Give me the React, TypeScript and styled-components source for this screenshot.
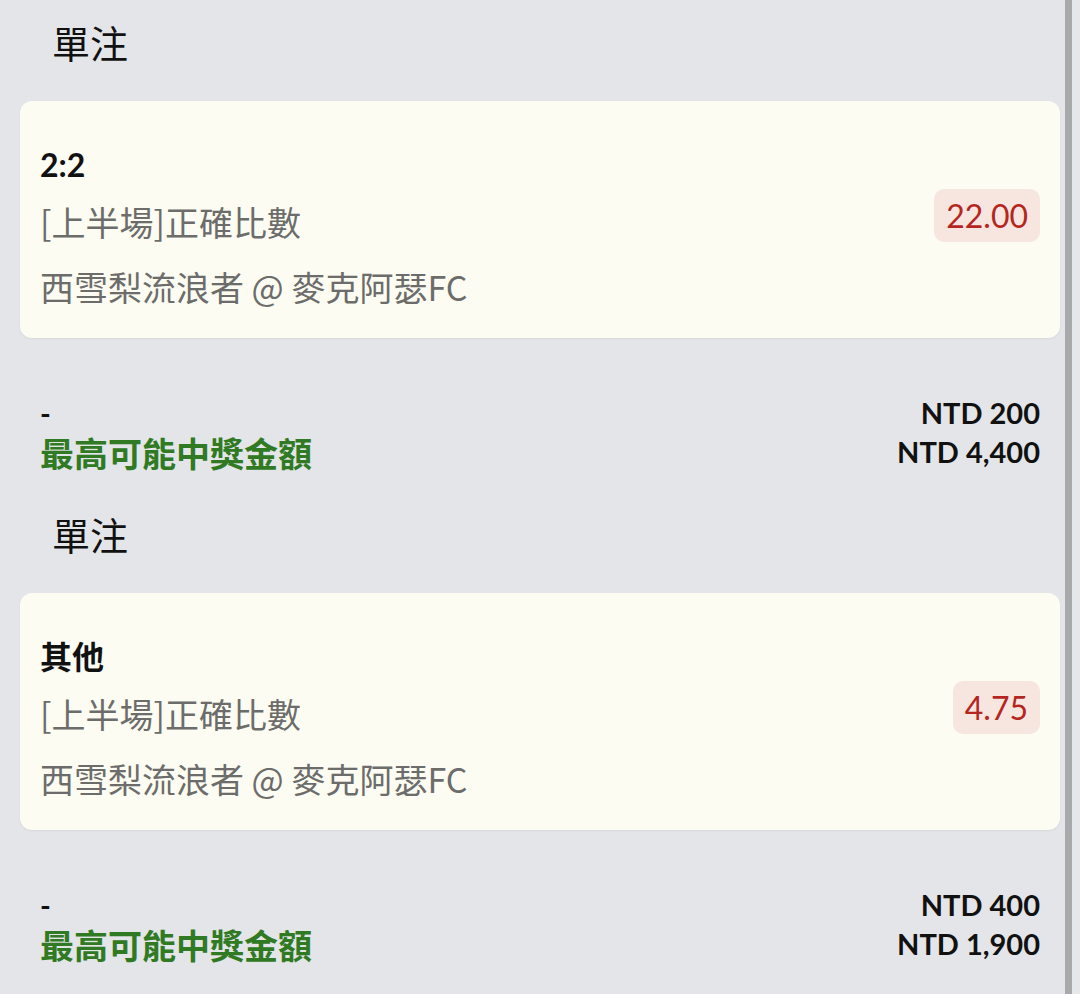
import React from "react";
import styled, { createGlobalStyle } from "styled-components";

const GlobalStyle = createGlobalStyle`
  html, body {
    margin: 0;
    padding: 0;
    background: #e4e5e8;
    min-height: 100%;
  }
  body {
    font-family: Lato, "Noto Sans CJK TC", sans-serif;
    -webkit-font-smoothing: antialiased;
  }
`;

const Page = styled.div`
  display: flex;
  width: 1080px;
  min-height: 994px;
  background: #e4e5e8;
`;

const Content = styled.div`
  width: 1065px;
  box-sizing: border-box;
  padding: 0 5px 0 20px;
`;

const ScrollTrack = styled.div`
  width: 7px;
  background: #a8a9ab;
`;

const Gutter = styled.div`
  flex: 1;
  background: #e6e7e8;
`;

const Section = styled.section`
  display: flex;
  flex-direction: column;
  height: 492px;
`;

const Title = styled.div`
  height: 101px;
  box-sizing: border-box;
  padding: 18px 0 0 32px;
  font-size: 38px;
  line-height: 50px;
  color: #111;
`;

const Card = styled.div`
  display: flex;
  align-items: center;
  justify-content: space-between;
  height: 237px;
  box-sizing: border-box;
  padding: 0 20px;
  background: #fcfcf3;
  border-radius: 12px;
  box-shadow: 0 1px 2px rgba(0, 0, 0, 0.06);
`;

const Details = styled.div`
  display: flex;
  flex-direction: column;
  align-self: stretch;
  padding-top: 36px;
`;

const Selection = styled.div`
  height: 56px;
  line-height: 56px;
  font-size: 32px;
  font-weight: 700;
  color: #111;
`;

const InfoLine = styled.div<{ tall?: boolean }>`
  height: ${p => (p.tall ? 72 : 58)}px;
  line-height: ${p => (p.tall ? 72 : 58)}px;
  font-family: "Noto Sans CJK TC", sans-serif;
  font-size: 34px;
  color: #6c6c6a;
`;

const OddsBadge = styled.div`
  height: 53px;
  line-height: 53px;
  margin-bottom: 8px;
  padding: 0 12px;
  border-radius: 10px;
  background: #f6e6df;
  color: #b4261f;
  font-size: 32px;
`;

const Footer = styled.div`
  display: flex;
  justify-content: space-between;
  padding: 55px 20px 0;
`;

const FooterCol = styled.div<{ right?: boolean }>`
  display: flex;
  flex-direction: column;
  align-items: ${p => (p.right ? "flex-end" : "flex-start")};
`;

const Amount = styled.div`
  height: 39px;
  line-height: 39px;
  font-size: 29px;
  font-weight: 700;
  color: #111;
`;

const PayoutLabel = styled.div`
  height: 39px;
  line-height: 43px;
  font-size: 34px;
  font-weight: 700;
  color: #2f7a22;
`;

interface IBet {
  selection: string;
  market: string;
  match: string;
  odds: string;
  stake: string;
  payout: string;
}

const bets: IBet[] = [
  { selection: "2:2", market: "[上半場]正確比數", match: "西雪梨流浪者 @ 麥克阿瑟FC", odds: "22.00", stake: "NTD 200", payout: "NTD 4,400" },
  { selection: "其他", market: "[上半場]正確比數", match: "西雪梨流浪者 @ 麥克阿瑟FC", odds: "4.75", stake: "NTD 400", payout: "NTD 1,900" },
];

const BetSlip = ({ bet }: { bet: IBet }) => (
  <Section>
    <Title>單注</Title>
    <Card>
      <Details>
        <Selection>{bet.selection}</Selection>
        <InfoLine>{bet.market}</InfoLine>
        <InfoLine tall>{bet.match}</InfoLine>
      </Details>
      <OddsBadge>{bet.odds}</OddsBadge>
    </Card>
    <Footer>
      <FooterCol>
        <Amount>-</Amount>
        <PayoutLabel>最高可能中獎金額</PayoutLabel>
      </FooterCol>
      <FooterCol right>
        <Amount>{bet.stake}</Amount>
        <Amount>{bet.payout}</Amount>
      </FooterCol>
    </Footer>
  </Section>
);

export default function App() {
  return (
    <Page>
      <GlobalStyle />
      <Content>
        {bets.map((bet, idx) => (
          <BetSlip bet={bet} key={idx} />
        ))}
      </Content>
      <ScrollTrack />
      <Gutter />
    </Page>
  );
}
